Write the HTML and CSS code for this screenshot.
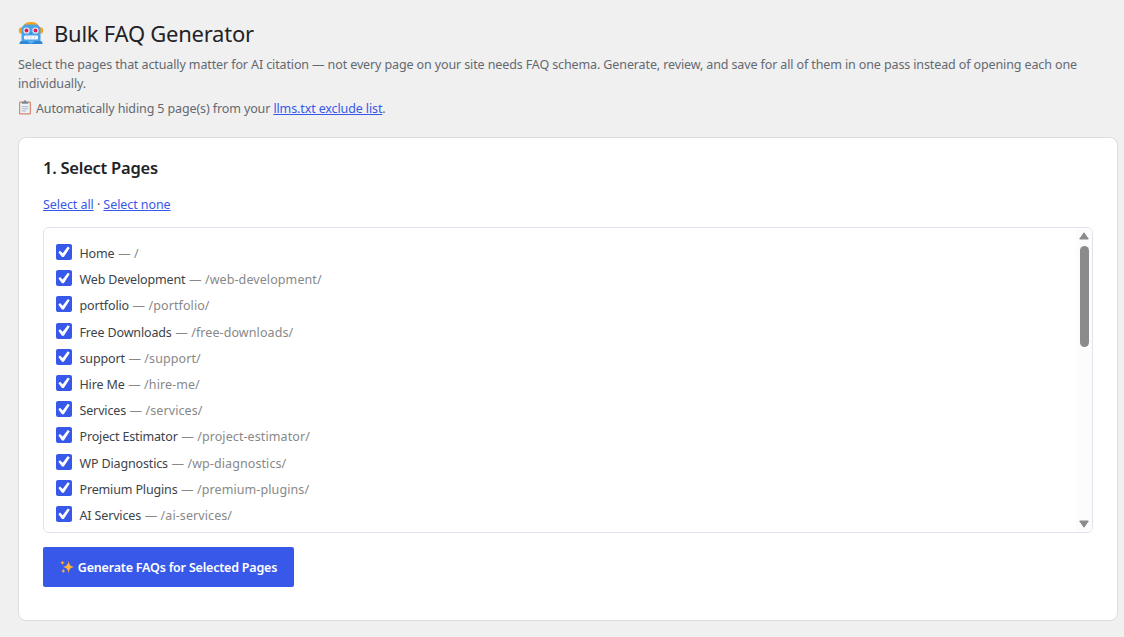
FILE: index.html
```html
<!DOCTYPE html>
<html lang="en">
<head>
<meta charset="utf-8">
<title>Bulk FAQ Generator</title>
<link rel="stylesheet" href="styles.css">
</head>
<body>
<main class="wrap">
  <h1 class="title">
    <svg class="robot" viewBox="0 0 26 26" aria-hidden="true">
      <circle cx="4" cy="9.500" r="3.200" fill="#f9a21b"/><circle cx="22" cy="9.500" r="3.200" fill="#f9a21b"/>
      <path d="M5 6Q6 1 13 1T21 6Z" fill="#f9a21b"/>
      <path d="M3.500 9Q3.500 3.500 9 3.500H17Q22.500 3.500 22.500 9V20.500H3.500Z" fill="#4ba3e8"/>
      <path d="M1.500 23V22Q1.500 20 4 20H22Q24.500 20 24.500 22V23Z" fill="#2f86d6"/>
      <path d="M9 20H17L13 23Z" fill="#5ab2ee"/>
      <circle cx="8.500" cy="9.500" r="3.100" fill="#e8edf5"/><circle cx="17.500" cy="9.500" r="3.100" fill="#e8edf5"/>
      <circle cx="8.500" cy="9.500" r="1.900" fill="#e51b45"/><circle cx="17.500" cy="9.500" r="1.900" fill="#e51b45"/>
      <path d="M12 13L13 11L14 13Z" fill="#2277c9"/>
      <rect x="6" y="14.500" width="14" height="4" rx="1" fill="#f5f7fa"/>
      <path d="M9.500 14.500V18.500M13 14.500V18.500M16.500 14.500V18.500" stroke="#b9cce2" stroke-width=".6"/>
    </svg>
    <span class="title-text">Bulk FAQ Generator</span>
  </h1>
  <p class="intro">Select the pages that actually matter for AI citation — not every page on your site needs FAQ schema. Generate, review, and save for all of them in one pass instead of opening each one<br>individually.</p>
  <p class="notice">
    <svg class="clipboard" viewBox="0 0 13 14" aria-hidden="true">
      <rect x="1.500" y="2" width="10" height="11" rx=".6" fill="#eef3f8" stroke="#d58370" stroke-width="1.100"/>
      <path d="M3.500 1.800H5Q5.200.3 6.500.3T8 1.800H9.500V3.600H3.500Z" fill="#7b8896"/>
      <path d="M3.500 6.200H9.500M3.500 8.200H9.500M3.500 10.200H7.500" stroke="#a7b4c4" stroke-width=".9"/>
    </svg>
    <span>Automatically hiding 5 page(s) from your <a href="#">llms.txt exclude list</a>.</span>
  </p>

  <section class="card">
    <h2 class="card-title">1. Select Pages</h2>
    <p class="toggles"><a href="#">Select all</a> · <a href="#">Select none</a></p>
    <div class="picker">
      <div class="pages">
        <label class="page"><input class="check" type="checkbox" checked><span class="name">Home <span class="path">— /</span></span></label>
        <label class="page"><input class="check" type="checkbox" checked><span class="name">Web Development <span class="path">— /web-development/</span></span></label>
        <label class="page"><input class="check" type="checkbox" checked><span class="name">portfolio <span class="path">— /portfolio/</span></span></label>
        <label class="page"><input class="check" type="checkbox" checked><span class="name">Free Downloads <span class="path">— /free-downloads/</span></span></label>
        <label class="page"><input class="check" type="checkbox" checked><span class="name">support <span class="path">— /support/</span></span></label>
        <label class="page"><input class="check" type="checkbox" checked><span class="name">Hire Me <span class="path">— /hire-me/</span></span></label>
        <label class="page"><input class="check" type="checkbox" checked><span class="name">Services <span class="path">— /services/</span></span></label>
        <label class="page"><input class="check" type="checkbox" checked><span class="name">Project Estimator <span class="path">— /project-estimator/</span></span></label>
        <label class="page"><input class="check" type="checkbox" checked><span class="name">WP Diagnostics <span class="path">— /wp-diagnostics/</span></span></label>
        <label class="page"><input class="check" type="checkbox" checked><span class="name">Premium Plugins <span class="path">— /premium-plugins/</span></span></label>
        <label class="page"><input class="check" type="checkbox" checked><span class="name">AI Services <span class="path">— /ai-services/</span></span></label>
      </div>
      <div class="scrollbar" aria-hidden="true">
        <svg class="arrow" viewBox="0 0 10 8"><path d="M5 .8L9.300 7H.7Z"/></svg>
        <div class="thumb"></div>
        <svg class="arrow arrow-down" viewBox="0 0 10 8"><path d="M.7 1H9.300L5 7.200Z"/></svg>
      </div>
    </div>
    <button class="generate" type="button">
      <svg class="sparkles" viewBox="0 0 14 14" aria-hidden="true">
        <path d="M8.500 1Q9 6.300 14 7Q9 7.700 8.500 13Q8 7.700 3 7Q8 6.300 8.500 1Z"/>
        <path d="M2.500.7Q2.800 2.400 4.700 2.800Q2.800 3.200 2.500 5Q2.200 3.200.3 2.800Q2.200 2.400 2.500.7ZM3.300 8.800Q3.600 10.500 5.300 10.900Q3.600 11.300 3.300 13Q3 11.300 1.300 10.900Q3 10.500 3.300 8.800Z"/>
      </svg>
      <span class="generate-text">Generate FAQs for Selected Pages</span>
    </button>
  </section>
</main>
</body>
</html>
```
FILE: styles.css
```css
* { box-sizing: border-box; }
body {
  margin: 0;
  background: #f0f0f0;
  color: #3c434a;
  font: 12.5px/19px "Noto Sans", "Open Sans", sans-serif;
  letter-spacing: -0.118px;
  overflow: hidden;
}
a { color: #3858e9; text-decoration: underline; text-underline-offset: 1px; text-decoration-thickness: 1px; }
p, h1, h2 { margin: 0; }
.wrap { width: 1118px; height: 637px; padding: 19px 0 0 18px; }
.title {
  display: flex;
  align-items: center;
  gap: 10px;
  height: 30px;
  color: #1d2327;
  font-size: 22px;
  font-weight: 400;
  line-height: 30px;
  letter-spacing: -0.25px;
}
.title-text { padding-bottom: 2px; }
.robot { width: 26px; height: 26px; }
.intro { margin-top: 6px; color: #646970; white-space: nowrap; }
.notice { display: flex; align-items: center; gap: 4px; margin-top: 6px; color: #646970; }
.clipboard { width: 14px; height: 15px; margin-top: -2px; }
.card {
  height: 484px;
  margin-top: 19px;
  padding: 18px 24px 0;
  background: #fff;
  border: 1px solid #dcdcde;
  border-radius: 8px;
}
.card-title { color: #1d2327; font-size: 16.5px; font-weight: 600; line-height: 24px; letter-spacing: -0.25px; }
.toggles { margin-top: 15px; letter-spacing: -0.07px; }
.picker {
  display: flex;
  height: 306px;
  margin-top: 13px;
  border: 1px solid #dfe3eb;
  border-radius: 6px;
  overflow: hidden;
}
.pages { flex: 1; padding: 11px 12px; }
.page { display: flex; align-items: center; gap: 7.5px; height: 26.2px; }
.name { padding-top: 3px; letter-spacing: -0.15px; }
.path { margin-left: 0.5px; color: #888; letter-spacing: 0.09px; }
.check {
  appearance: none;
  flex: none;
  width: 16px;
  height: 16px;
  margin: 0;
  border-radius: 2px;
  background: #3858e9;
}
.check::before {
  content: "";
  display: block;
  width: 20px;
  height: 20px;
  margin: -2px 0 0 -3px;
  background: #fff;
  clip-path: polygon(74% 22.500%, 84% 29%, 54% 75%, 45% 75%, 27% 51%, 35% 43%, 48.500% 56%);
}
.scrollbar {
  display: flex;
  flex-direction: column;
  align-items: center;
  width: 16px;
  padding: 4px 0 4px;
  background: #fcfcfc;
}
.arrow { width: 10px; height: 8px; fill: #8b8b8b; stroke: #8b8b8b; stroke-linejoin: round; }
.arrow-down { margin-top: auto; }
.thumb { width: 9px; height: 101px; margin-top: 6px; border-radius: 5px; background: #8b8b8b; }
.generate {
  display: flex;
  align-items: center;
  justify-content: center;
  gap: 4px;
  width: 251px;
  height: 40px;
  margin-top: 14px;
  padding: 0;
  border: 0;
  border-radius: 2px;
  background: #3858e9;
  color: #fff;
  font: 600 12.5px/20px "Noto Sans", "Open Sans", sans-serif;
  letter-spacing: -0.2px;
  white-space: nowrap;
}
.generate-text { padding-top: 2px; }
.sparkles { width: 14px; height: 14px; fill: #ffb037; }
```
